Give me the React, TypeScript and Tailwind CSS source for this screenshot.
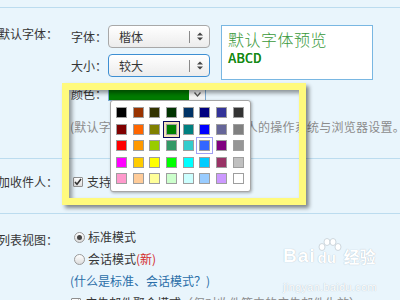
import React from "react";

const palette: string[][] = [
  ["#000000", "#993300", "#333300", "#003300", "#003366", "#000080", "#333399", "#333333"],
  ["#800000", "#FF6600", "#808000", "#008000", "#008080", "#0000FF", "#666699", "#808080"],
  ["#FF0000", "#FF9900", "#99CC00", "#339966", "#33CCCC", "#3366FF", "#800080", "#969696"],
  ["#FF00FF", "#FFCC00", "#FFFF00", "#00FF00", "#00FFFF", "#00CCFF", "#993366", "#C0C0C0"],
  ["#FF99CC", "#FFCC99", "#FFFF99", "#CCFFCC", "#CCFFFF", "#99CCFF", "#CC99FF", "#FFFFFF"],
];

function UpDown() {
  return (
    <svg width="6" height="9" viewBox="0 0 6 9">
      <path d="M0 3.5 L3 0.5 L6 3.5 Z" fill="#444" />
      <path d="M0 5.5 L3 8.5 L6 5.5 Z" fill="#444" />
    </svg>
  );
}

function Select({ text, focused }: { text: string; focused?: boolean }) {
  return (
    <div
      className={
        "flex items-center w-[102px] h-[23px] rounded-[4px] border bg-gradient-to-b from-white to-[#ececec] " +
        (focused ? "border-[#3d8fd3]" : "border-[#a8a8a8]")
      }
    >
      <span className="pl-[10px] flex-1 leading-[16px]">{text}</span>
      <span className="w-px h-[12px] bg-[#8a8a8a]" />
      <span className="w-[19px] flex justify-center">
        <UpDown />
      </span>
    </div>
  );
}

function Radio({ checked }: { checked?: boolean }) {
  return (
    <span className="w-[11px] h-[11px] rounded-full border border-[#9a9a9a] bg-gradient-to-b from-white to-[#dcdcdc] flex items-center justify-center">
      {checked && <span className="w-[5px] h-[5px] rounded-full bg-[#454545]" />}
    </span>
  );
}

function Check() {
  return (
    <span className="w-[10px] h-[10px] border border-[#8f8f8f] bg-gradient-to-b from-white to-[#dedede] flex items-center justify-center rounded-[1px]">
      <svg width="8" height="8" viewBox="0 0 8 8">
        <path d="M1 4 L3 6.2 L7 1" stroke="#333" strokeWidth="1.6" fill="none" />
      </svg>
    </span>
  );
}

export default function App() {
  return (
    <div className="relative w-[400px] h-[300px] overflow-hidden bg-[#e9f5fc] text-[12px] text-[#363636] font-['Noto_Sans_CJK_SC','Noto_Sans',sans-serif]">
      <div className="h-[8px] border-b border-[#bcdcef]" />

      {/* Section 1: default font */}
      <div className="flex h-[151px] border-b border-[#bcdcef] ml-[-2px]">
        <div className="w-[60px] pt-[18px] leading-[16px] whitespace-nowrap">默认字体：</div>
        <div className="flex-1 pt-[17px]">
          <div className="flex pl-[13px]">
            <div className="flex flex-col gap-[6px]">
              <div className="flex items-center">
                <span className="w-[37px] leading-[16px]">字体：</span>
                <Select text="楷体" />
              </div>
              <div className="flex items-center">
                <span className="w-[37px] leading-[16px]">大小：</span>
                <Select text="较大" focused />
              </div>
              <div className="flex items-center h-[18px]">
                <span className="w-[37px] leading-[16px] mt-[4px]">颜色：</span>
                <div className="flex w-[98px] h-[18px] border border-[#7aa9d2] bg-[#f4f4f4]">
                  <div className="w-[80px] bg-[#007c00]" />
                  <div className="flex-1 flex items-center justify-center pt-[4px]">
                    <svg width="7" height="5" viewBox="0 0 7 5">
                      <path d="M0.5 0.5 L3.5 4 L6.5 0.5" stroke="#555" strokeWidth="1.3" fill="none" />
                    </svg>
                  </div>
                </div>
              </div>
            </div>
            <div className="ml-[11px] w-[152px] h-[55px] border border-[#79b7e2] bg-white pl-[6px] pt-[4px]">
              <div className="text-[16px] font-light leading-[19px] text-[#3a993a] tracking-[0.5px]">默认字体预览</div>
              <div className="font-['DejaVu_Sans_Mono',monospace] text-[14px] leading-[17px] mt-[1px] text-[#178a17] [text-shadow:0_0_0.4px_#178a17]">ABCD</div>
            </div>
          </div>
          <div className="mt-[18px] pl-[12px] leading-[16px] text-[#8c8c8c] whitespace-nowrap tracking-[0.25px]">
            (默认字体的显示效果取决于收件人的操作系统与浏览器设置。
          </div>
        </div>
      </div>

      {/* Section 2 */}
      <div className="flex h-[55px] border-b border-[#bcdcef] ml-[-2px]">
        <div className="w-[60px] pt-[15px] leading-[16px] whitespace-nowrap">加收件人：</div>
        <div className="flex-1 pt-[15px] pl-[15px] flex items-start gap-[4px] leading-[16px]">
          <span className="mt-[3px]">
            <Check />
          </span>
          <span>支持</span>
        </div>
      </div>

      {/* Section 3 */}
      <div className="flex ml-[-2px]">
        <div className="w-[60px] pt-[18px] leading-[16px] whitespace-nowrap">列表视图：</div>
        <div className="flex-1 pt-[12px] pl-[16px]">
          <div className="h-[22px] flex items-center gap-[3px]">
            <Radio checked />
            <span className="leading-[16px]">标准模式</span>
          </div>
          <div className="h-[22px] flex items-center gap-[3px]">
            <Radio />
            <span className="leading-[16px]">
              会话模式<span className="text-[#d42a2a]">(新)</span>
            </span>
          </div>
          <div className="h-[22px] flex items-center ml-[-4px] text-[#2a6ea8] leading-[16px]">
            (什么是标准、会话模式？)
          </div>
          <div className="h-[22px] flex items-center gap-[4px] ml-[-3px] leading-[16px] whitespace-nowrap">
            <Check />
            <span>
              广告邮件聚合模式<span className="text-[#8c8c8c]">（仅对收件箱中的广告邮件生效）</span>
            </span>
          </div>
        </div>
      </div>

      {/* Watermark */}
      <div className="absolute left-[283px] top-[244px] text-white [text-shadow:0_0_1px_#9fb0bd] select-none">
        <div className="flex items-end h-[22px]">
          <span className="font-['Liberation_Sans',sans-serif] font-bold text-[19px] leading-[20px] tracking-[1px]">Bai</span>
          <span className="relative w-[26px] h-[22px]">
            <svg className="absolute left-0 top-[-6px]" width="26" height="16" viewBox="0 0 26 16">
              <g fill="#fff" stroke="#c4ced6" strokeWidth="0.8">
                <ellipse cx="6" cy="9" rx="3" ry="3.5" />
                <ellipse cx="11" cy="4" rx="3" ry="3.5" />
                <ellipse cx="17" cy="4" rx="3" ry="3.5" />
                <ellipse cx="22" cy="9" rx="3" ry="3.5" />
              </g>
            </svg>
            <span className="absolute left-[2px] bottom-0 font-['Liberation_Sans',sans-serif] font-bold text-[15px] leading-[16px]">du</span>
          </span>
          <span className="text-[16px] leading-[20px] font-bold ml-[2px]">经验</span>
        </div>
        <div className="font-['Liberation_Sans',sans-serif] text-[11px] leading-[14px] mt-[14px] tracking-[0.3px]">jingyan.baidu.com</div>
      </div>

      {/* Color palette popup */}
      <div className="absolute left-[110px] top-[100px] w-[141px] h-[92px] bg-white border border-[#a6a6a6] rounded-[3px] shadow-[1px_1px_3px_rgba(0,0,0,0.3)] pl-[5px] pt-[6px]">
        <div className="grid grid-cols-[repeat(8,11px)] gap-x-[5.7px] gap-y-[5.6px]">
          {palette.map((row, r) =>
            row.map((c, i) => {
              const sel = r === 1 && i === 3;
              const hov = r === 2 && i === 5;
              return (
                <div
                  key={r + "-" + i}
                  className={
                    "w-[11px] h-[11px] border border-[#9e9e9e] " +
                    (sel
                      ? "shadow-[0_0_0_2px_#f6e3bb,0_0_0_3px_#0a0a5e]"
                      : hov
                      ? "shadow-[0_0_0_2px_#ffffff,0_0_0_3px_#9f9ff2]"
                      : "")
                  }
                  style={{ backgroundColor: c }}
                />
              );
            })
          )}
        </div>
      </div>

      {/* Yellow highlight frame */}
      <div className="absolute left-[62px] top-[83px] w-[244px] h-[122px] border-[7px] border-[#fffa7d] shadow-[3px_3px_4px_rgba(0,0,0,0.45),inset_3px_3px_4px_rgba(0,0,0,0.4)]" />
    </div>
  );
}
